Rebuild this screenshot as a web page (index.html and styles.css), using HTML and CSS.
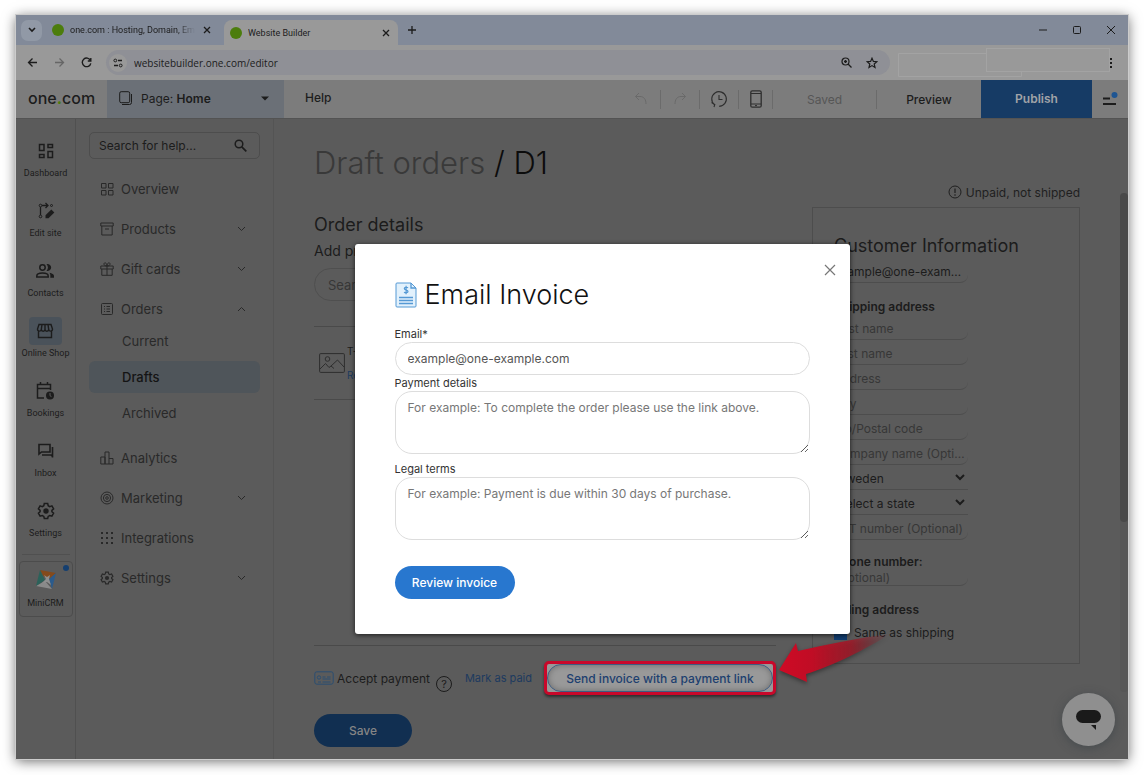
FILE: index.html
```html
<!DOCTYPE html>
<html lang="en">
  <head>
    <meta charset="UTF-8" />
    <meta name="viewport" content="width=device-width, initial-scale=1" />
    <title>Website Builder</title>
    <link rel="stylesheet" href="styles.css">
  </head>
  <body>
    <div class="window">
      <header class="tabs">
        <button class="tab-list" aria-label="Search tabs"><svg width="8" height="6" viewBox="0 0 8 6"><path d="M1 1l3 3 3-3" stroke-width="1.6" /></svg></button>
        <div class="tab">
          <span class="favicon"></span>
          <span class="tab-title fade">one.com : Hosting, Domain, Em</span>
          <button class="plain" aria-label="Close tab"><svg width="8" height="8" viewBox="0 0 8 8"><path d="M1 1l6 6M7 1L1 7" stroke-width="1.3" /></svg></button>
        </div>
        <div class="tab active">
          <span class="favicon"></span>
          <span class="tab-title">Website Builder</span>
          <button class="plain" aria-label="Close tab"><svg width="8" height="8" viewBox="0 0 8 8"><path d="M1 1l6 6M7 1L1 7" stroke-width="1.3" /></svg></button>
        </div>
        <button class="plain" aria-label="New tab"><svg width="10" height="10" viewBox="0 0 10 10"><path d="M5 1v8M1 5h8" stroke-width="1.3" /></svg></button>
        <div class="window-buttons">
          <button class="plain" aria-label="Minimize"><svg width="10" height="10" viewBox="0 0 10 10"><path d="M1 5h8" /></svg></button>
          <button class="plain" aria-label="Maximize"><svg width="10" height="10" viewBox="0 0 10 10"><rect x="1.5" y="1.5" width="7" height="7" rx="1" /></svg></button>
          <button class="plain" aria-label="Close"><svg width="10" height="10" viewBox="0 0 10 10"><path d="M1 1l8 8M9 1L1 9" /></svg></button>
        </div>
      </header>

      <div class="toolbar">
        <button class="plain" aria-label="Back"><svg width="11" height="11" viewBox="0 0 11 11"><path d="M10 5.500H1.500M5.500 1.500l-4 4 4 4" stroke-width="1.3" /></svg></button>
        <button class="plain muted" aria-label="Forward"><svg width="11" height="11" viewBox="0 0 11 11"><path d="M1 5.500h8.500M5.500 1.500l4 4-4 4" stroke-width="1.3" /></svg></button>
        <button class="plain" aria-label="Reload"><svg width="11" height="11" viewBox="0 0 11 11"><path d="M9.500 3.500A4.300 4.300 0 1 0 9.800 6.300M9.800 1v3H6.800" stroke-width="1.4" /></svg></button>
        <div class="address">
          <span class="site-info"><svg width="10" height="10" viewBox="0 0 10 10"><circle cx="2.300" cy="2.500" r="1.400" /><path d="M5 2.500h4M1 7.500h4" stroke-width="1.3" /><circle cx="7.700" cy="7.500" r="1.400" /></svg></span>
          <input class="url" type="text" value="websitebuilder.one.com/editor" aria-label="Address">
          <svg width="11" height="11" viewBox="0 0 11 11"><circle cx="4.500" cy="4.500" r="3.500" stroke-width="1.2" /><path d="M7 7l3.500 3.500M3 4.500h3M4.500 3v3" stroke-width="1.3" /></svg>
          <svg class="star" width="12" height="12" viewBox="0 0 12 12"><path d="M6 1.200l1.400 3.200 3.500.3-2.700 2.300.8 3.400L6 8.600l-3 1.800.8-3.400L1.100 4.700l3.500-.3z" stroke-width="1.2" /></svg>
        </div>
        <svg class="extensions" width="213" height="30" viewBox="0 0 213 30"><path d="M88.500 5.500H.5v23h123v-5" /><rect x="88.500" y=".5" width="123" height="23" /></svg>
        <button class="plain" aria-label="Menu"><svg width="4" height="12" viewBox="0 0 4 12"><path class="solid" d="M1 1h2v2H1zM1 5h2v2H1zM1 9h2v2H1z" /></svg></button>
      </div>

      <nav class="appbar">
        <a class="logo" href="#">one<span>.</span>com</a>
        <button class="page-select">
          <svg width="14" height="15" viewBox="0 0 14 15"><rect x=".7" y=".7" width="10" height="11" rx="1.500" /><path d="M3 13.500h7.500a2 2 0 0 0 2-2V3" /></svg>
          <span>Page: <b>Home</b></span>
          <svg width="8" height="5" viewBox="0 0 8 5"><path class="solid" d="M0 .5h8L4 4.500z" /></svg>
        </button>
        <a class="help" href="#">Help</a>
        <div class="actions">
          <button class="action ghost" aria-label="Undo"><svg width="14" height="14" viewBox="0 0 14 14"><path d="M5 1L1.500 4.500 5 8M1.500 4.500H6c4 0 6 3 6 7.500" /></svg></button>
          <button class="action ghost" aria-label="Redo"><svg width="14" height="14" viewBox="0 0 14 14"><path d="M9 1l3.500 3.500L9 8M12.500 4.500H8C4 4.500 2 7.500 2 12" /></svg></button>
          <button class="action" aria-label="History"><svg width="18" height="18" viewBox="0 0 18 18"><path d="M4.500 14.700A7.300 7.300 0 1 1 9 16.300M1.500 12.500l3.300 2-.8 2.500M9 5v4.500h3.500" stroke-width="1.1" /></svg></button>
          <button class="action phone" aria-label="Mobile view"><svg width="12" height="18" viewBox="0 0 12 18"><rect x=".8" y=".8" width="10.400" height="16.400" rx="1.500" stroke-width="1.3" /><path d="M1 3.500h10M1 14h10M5 15.600h2" /></svg></button>
          <span class="saved">Saved</span>
          <button class="preview">Preview</button>
        </div>
        <button class="publish">Publish</button>
        <button class="burger" aria-label="Main menu">
          <svg width="16" height="16" viewBox="0 0 16 16"><path d="M1 7.500h7M1 13h13" stroke-width="2" /><circle class="dot" cx="12.500" cy="4" r="3" /></svg>
        </button>
      </nav>

      <div class="app">
        <aside class="rail">
          <a class="rail-item" href="#"><span class="rail-icon"><svg width="18" height="18" viewBox="0 0 18 18"><path d="M2.500 2.500h4.500v6H2.500zM11 2.500h4.500v3H11zM2.500 12.500h4.500v3H2.500zM11 9.500h4.500v6H11z" stroke-width="1.500" /></svg></span>Dashboard</a>
          <a class="rail-item" href="#"><span class="rail-icon"><svg width="18" height="18" viewBox="0 0 18 18"><circle cx="3.500" cy="3.500" r="1.300" /><circle cx="3.500" cy="14.500" r="1.300" /><circle cx="14.500" cy="3.500" r="1" /><path d="M3.500 5v8M5 3.500h6M8.500 1l2.500 2.500L8.500 6" stroke-width="1.300" /><path class="solid" d="M8.500 16.300v-3l5.800-5.800 3 3-5.800 5.800z" /></svg></span>Edit site</a>
          <a class="rail-item" href="#"><span class="rail-icon"><svg width="20" height="18" viewBox="0 0 20 18"><circle cx="7.500" cy="5.500" r="2.700" stroke-width="1.500" /><path d="M1.800 15v-1c0-1.800 2.700-3 5.700-3s5.700 1.200 5.700 3v1z" stroke-width="1.500" /><path class="solid" d="M11.500 2.200a3.500 3.500 0 1 1 0 6.600 4.500 4.500 0 0 0 0-6.600zM14.500 10.800c2.500.6 4.500 1.500 4.500 3.200v1.700h-3.700c.2-2 .2-3.300-.8-4.900z" /></svg></span>Contacts</a>
          <a class="rail-item current" href="#"><span class="rail-icon"><svg width="18" height="18" viewBox="0 0 18 18"><path d="M2.500 9v6.500h13V9M3 2.500h12L16.500 7c0 2.800-3.500 2.800-3.800.3-.2 2.500-3.500 2.500-3.700 0-.2 2.500-3.500 2.500-3.700 0C5 9.800 1.500 9.800 1.500 7zM5.300 7.300l.7-4.800M9 7.300V2.500M12.700 7.300L12 2.500" stroke-width="1.400" /></svg></span>Online Shop</a>
          <a class="rail-item" href="#"><span class="rail-icon"><svg width="20" height="20" viewBox="0 0 20 20"><path d="M9 17H2.500V3.500h13V9M2.500 7.500h13M5.500 1v2.500M12.500 1v2.500" stroke-width="1.500" /><circle class="solid" cx="15" cy="14.500" r="4" /><path class="hand" d="M15 12v2.700l1.500 1" /></svg></span>Bookings</a>
          <a class="rail-item" href="#"><span class="rail-icon"><svg width="18" height="18" viewBox="0 0 18 18"><path d="M2 12V2.500h11V10H4.500zM15.500 5v10.500M5 13h9l2 2" stroke-width="1.600" /></svg></span>Inbox</a>
          <a class="rail-item" href="#"><span class="rail-icon"><svg width="18" height="18" viewBox="0 0 18 18"><path d="M7.300 1.500h3.400l.5 2.200 1.500.9 2.200-.7 1.700 3-1.700 1.500v1.300l1.700 1.500-1.700 3-2.200-.7-1.500.9-.5 2.100H7.300l-.5-2.100-1.500-.9-2.200.7-1.700-3 1.700-1.500V8.400L1.400 6.900l1.700-3 2.200.7 1.500-.9z" stroke-width="1.500" /><circle class="solid" cx="9" cy="9" r="2.700" /></svg></span>Settings</a>
          <hr>
          <a class="crm" href="#">
            <svg width="22" height="22" viewBox="0 0 22 22"><path class="orange" d="M5 1l16 3-6 6-7-3z" /><path class="blue" d="M21 4l-4 16-3-10z" /><path class="grey" d="M1 17l9-5 7 8z" /><path class="green" d="M5 1L1 17l9-6z" /><path class="white" d="M9 6l3 2 3-2-1 4 2 6-4-3-5 1 4-4z" /></svg>
            MiniCRM
            <span class="badge"></span>
          </a>
        </aside>

        <div class="workspace">
          <nav class="menu">
            <div class="help-search">
              <input type="search" placeholder="Search for help..." aria-label="Search for help">
              <svg width="13" height="13" viewBox="0 0 13 13"><circle cx="5" cy="5" r="3.800" stroke-width="1.500" /><path d="M7.800 7.800l4.500 4.500" stroke-width="1.700" /></svg>
            </div>
            <a class="menu-item" href="#"><svg width="14" height="14" viewBox="0 0 14 14"><path d="M1.500 1.500H6V6H1.500zM8.500 1.500H13V6H8.500zM1.500 8.500H6V13H1.500zM8.500 8.500H13V13H8.500z" /></svg><span>Overview</span></a>
            <a class="menu-item" href="#"><svg width="14" height="14" viewBox="0 0 14 14"><path d="M.8 1h12.400v3H.8zM1.800 4v9h10.400V4M5 7h4" /></svg><span>Products</span><svg width="9" height="6" viewBox="0 0 9 6"><path d="M1 1l3.500 3.500L8 1" /></svg></a>
            <a class="menu-item" href="#"><svg width="14" height="14" viewBox="0 0 14 14"><path d="M.8 4h12.400v3H.8zM1.800 7v6.300h10.400V7M7 4v9.300M7 4C3 4 3.500.5 5.300.8 6.700 1 7 4 7 4s.3-3 1.700-3.200C10.500.5 11 4 7 4z" /></svg><span>Gift cards</span><svg width="9" height="6" viewBox="0 0 9 6"><path d="M1 1l3.500 3.500L8 1" /></svg></a>
            <a class="menu-item" href="#"><svg width="14" height="14" viewBox="0 0 14 14"><rect x="1.500" y="1.500" width="11" height="11" rx="1" /><path d="M4 4.500h1M4 7h1M4 9.500h1M6.500 4.500H10M6.500 7H10M6.500 9.500H10" /></svg><span>Orders</span><svg width="9" height="6" viewBox="0 0 9 6"><path d="M1 5l3.500-3.500L8 5" /></svg></a>
            <div class="submenu">
              <a href="#">Current</a>
              <a class="current" href="#">Drafts</a>
              <a href="#">Archived</a>
            </div>
            <a class="menu-item" href="#"><svg width="14" height="14" viewBox="0 0 14 14"><path d="M.8 6H5v7H.8zM5 13V1h4v12M9 7.500h4V13H5" /></svg><span>Analytics</span></a>
            <a class="menu-item" href="#"><svg width="14" height="14" viewBox="0 0 14 14"><circle cx="7" cy="7" r="6" /><circle cx="7" cy="7" r="3.600" /><circle cx="7" cy="7" r="1.300" /></svg><span>Marketing</span><svg width="9" height="6" viewBox="0 0 9 6"><path d="M1 1l3.500 3.500L8 1" /></svg></a>
            <a class="menu-item" href="#"><svg width="14" height="14" viewBox="0 0 14 14"><path d="M2 1v12M7 1v12M12 1v12" stroke-width="2" stroke-dasharray="2 3" /></svg><span>Integrations</span></a>
            <a class="menu-item" href="#"><svg width="14" height="14" viewBox="0 0 18 18"><path d="M7.300 1.500h3.400l.5 2.200 1.500.9 2.200-.7 1.700 3-1.700 1.500v1.300l1.700 1.500-1.700 3-2.200-.7-1.500.9-.5 2.100H7.300l-.5-2.100-1.500-.9-2.200.7-1.700-3 1.700-1.500V8.400L1.400 6.900l1.700-3 2.200.7 1.500-.9z" stroke-width="1.500" /><circle class="solid" cx="9" cy="9" r="2.700" /></svg><span>Settings</span><svg width="9" height="6" viewBox="0 0 9 6"><path d="M1 1l3.500 3.500L8 1" /></svg></a>
          </nav>

          <main class="content">
            <section class="order">
              <h1><a href="#">Draft orders</a> / D1</h1>
              <h2>Order details</h2>
              <label class="add-label" for="product">Add products</label>
              <input class="product-search" type="text" id="product" placeholder="Search products">
              <div class="product">
                <svg width="26" height="20" viewBox="0 0 26 20"><rect x=".6" y=".6" width="24.800" height="18.800" rx="1" /><circle cx="8.500" cy="6" r="2.300" /><path d="M1 16l5.500-5.500 3.500 4 2-1.500 3 2.500M12 13l6.500-6L25 14" /></svg>
                <div class="product-info">
                  <span>T-shirt</span>
                  <a href="#">Remove</a>
                </div>
              </div>
              <div class="order-actions">
                <svg class="card-icon" width="20" height="14" viewBox="0 0 20 14"><rect x=".8" y=".8" width="18.400" height="12.400" rx="2" /><circle cx="5" cy="6.500" r="1.700" /><path d="M8.500 6h3M13 6h3.500M8.500 8h8M4 11h3M8.500 11h8" /></svg>
                <span class="accept">Accept payment</span>
                <button class="question" aria-label="About payments">?</button>
                <a class="paid" href="#">Mark as paid</a>
                <div class="send-wrap">
                  <button class="send">Send invoice with a payment link</button>
                  <svg class="arrow" width="114" height="52" viewBox="0 0 114 52">
                    <defs>
                      <linearGradient id="fade">
                        <stop offset="0" stop-color="#cf0a25" />
                        <stop offset=".3" stop-color="#c00d25" />
                        <stop offset=".65" stop-color="#a01827" stop-opacity=".85" />
                        <stop offset="1" stop-color="#8a2630" stop-opacity="0" />
                      </linearGradient>
                    </defs>
                    <path fill="url(#fade)" d="M1 37L18 10l2 8c30-7 60-13 92-17C90 15 55 33 28 41l1 8z" />
                  </svg>
                </div>
              </div>
              <button class="save">Save</button>
            </section>

            <section class="side">
              <p class="status"><svg width="14" height="14" viewBox="0 0 14 14"><circle cx="7" cy="7" r="6" /><path d="M7 3.500v4.500M7 9.300v1.400" stroke-width="1.200" /></svg>Unpaid, not shipped</p>
              <form class="customer">
                <h2>Customer Information</h2>
                <input type="text" value="example@one-example.com" aria-label="Customer email">
                <h3>Shipping address</h3>
                <input type="text" placeholder="First name" aria-label="First name">
                <input type="text" placeholder="Last name" aria-label="Last name">
                <input type="text" placeholder="Address" aria-label="Address">
                <input type="text" placeholder="City" aria-label="City">
                <input type="text" placeholder="Zip/Postal code" aria-label="Zip/Postal code">
                <input type="text" placeholder="Company name (Optional)" aria-label="Company name">
                <select aria-label="Country"><option>Sweden</option></select>
                <select aria-label="State"><option>Select a state</option></select>
                <input type="text" placeholder="VAT number (Optional)" aria-label="VAT number">
                <label class="field-title" for="phone">Phone number:</label>
                <input class="short" type="tel" id="phone" placeholder="(Optional)">
                <h3>Billing address</h3>
                <label class="same"><input type="checkbox" checked>Same as shipping</label>
              </form>
            </section>
          </main>

          <div class="scrollbar"><div class="thumb"></div></div>

          <div class="overlay">
            <form class="modal" role="dialog" aria-labelledby="modalTitle">
              <button class="close" type="button" aria-label="Close"><svg width="12" height="12" viewBox="0 0 12 12"><path d="M1 1l10 10M11 1L1 11" stroke-width="1.200" /></svg></button>
              <h2 id="modalTitle">
                <svg width="22" height="26" viewBox="0 0 22 26"><path class="sheet" d="M2 1h14l5 5v18a1 1 0 0 1-1 1H2a1 1 0 0 1-1-1V2a1 1 0 0 1 1-1z" /><path d="M16 1v5h5M4 15.500h14M4 18.500h14M4 21.500h14" stroke-width="1.300" /><path d="M13 5.800c-.7-.8-3.700-.8-3.700.8 0 2 3.700 1 3.700 2.900 0 1.600-3 1.600-3.900.6M11.100 3.700v8.500" stroke-width="1.200" /></svg>
                Email Invoice
              </h2>
              <label for="email">Email*</label>
              <input type="text" id="email" value="example@one-example.com">
              <label for="details">Payment details</label>
              <textarea id="details" placeholder="For example: To complete the order please use the link above."></textarea>
              <label class="legal" for="terms">Legal terms</label>
              <textarea id="terms" placeholder="For example: Payment is due within 30 days of purchase."></textarea>
              <button class="review" type="button">Review invoice</button>
            </form>
          </div>

          <button class="chat" aria-label="Chat"><svg width="26" height="22" viewBox="0 0 26 22"><rect x="0" y="1" width="25" height="13" rx="6.500" /><path d="M15 16h5v5z" /></svg></button>
        </div>
      </div>
    </div>
  </body>
</html>
```
FILE: styles.css
```css
* {
  box-sizing: border-box;
  margin: 0;
  padding: 0;
}

body {
  font-family: 'Inter', sans-serif;
  font-size: 13px;
  background-color: #fff;
  color: #1c1c1c;
  display: flex;
  min-height: 100vh;
  padding: 15px 16px 16px;
}

a {
  color: inherit;
  text-decoration: none;
}

button,
input,
select,
textarea {
  font: inherit;
  color: inherit;
  background: none;
  border: none;
  outline: none;
}

button {
  cursor: pointer;
}

svg {
  display: block;
  flex: none;
  fill: none;
  stroke: currentColor;
}

.solid {
  fill: currentColor;
  stroke: none;
}

.window {
  flex: 1;
  display: flex;
  flex-direction: column;
  min-width: 0;
  background-color: #5b5b5b;
  box-shadow: 0 0 0 1px #ccc, 0 2px 12px rgba(0, 0, 0, 0.6);
}

/* browser chrome */
.tabs {
  display: flex;
  align-items: center;
  height: 30px;
  padding-left: 5px;
  background-color: #828a99;
  font-family: 'Roboto', sans-serif;
  font-size: 9px;
}

.plain {
  display: flex;
  padding: 2px;
}

.tab-list {
  display: flex;
  align-items: center;
  justify-content: center;
  width: 21px;
  height: 21px;
  border-radius: 7px;
  background-color: #9199a6;
}

.tab {
  display: flex;
  align-items: center;
  gap: 6px;
  width: 174px;
  height: 25px;
  padding: 0 3px 0 10px;
}

.tab.active {
  align-self: flex-end;
  margin: 0 7px 0 8px;
  padding: 0 6px;
  background-color: #999;
  border-radius: 8px 8px 0 0;
}

.favicon {
  flex: none;
  width: 12px;
  height: 12px;
  border-radius: 50%;
  background-color: #4c7d0c;
}

.tab-title {
  flex: 1;
  overflow: hidden;
  white-space: nowrap;
}

.tab-title.fade {
  mask-image: linear-gradient(to right, #000 85%, transparent);
}

.window-buttons {
  display: flex;
  gap: 20px;
  margin-left: auto;
  padding-right: 10px;
}

.toolbar {
  display: flex;
  align-items: center;
  gap: 12px;
  height: 35px;
  padding: 0 13px 0 9px;
  background-color: #999;
}

.toolbar .muted {
  color: #666;
}

.address {
  flex: 1;
  display: flex;
  align-items: center;
  gap: 14px;
  height: 25px;
  padding: 0 12px 0 3px;
  border-radius: 13px;
  background-color: #8f9096;
}

.site-info {
  display: flex;
  align-items: center;
  justify-content: center;
  width: 18px;
  height: 18px;
  border-radius: 50%;
  background-color: #999;
}

.url {
  flex: 1;
  min-width: 0;
  margin-left: -7px;
  font-family: 'Open Sans', sans-serif;
  font-size: 10px;
}

.extensions {
  margin: 0 -12px 0 -4px;
  margin-right: -16px;
  stroke: #a3a3a3;
}

/* editor bar */
.appbar {
  display: flex;
  align-items: stretch;
  height: 38px;
  background-color: #7c7c7c;
  font-size: 12px;
}

.logo {
  width: 91px;
  padding: 8px 0 0 12px;
  font-size: 16px;
  font-weight: 500;
}

.logo span {
  color: #4c7d0c;
  font-weight: 700;
}

.page-select {
  display: flex;
  align-items: center;
  gap: 8px;
  width: 177px;
  padding: 0 15px 2px 12px;
  background-color: #6b7077;
  text-align: left;
}

.page-select span {
  flex: 1;
}

.page-select b {
  font-weight: 600;
}

.help {
  padding: 10px 0 0 21px;
  font-weight: 500;
}

.actions {
  display: flex;
  align-items: center;
  margin-left: auto;
}

.action {
  display: flex;
  align-items: center;
  justify-content: center;
  width: 39px;
  height: 19px;
  border-right: 1px solid #6b6b6b;
}

.action.phone {
  width: 34px;
}

.action svg {
  color: #2e2e2e;
}

.action.ghost svg {
  color: #6a6a6a;
}

.saved {
  width: 104px;
  border-right: 1px solid #6b6b6b;
  color: #565656;
  line-height: 19px;
  text-align: center;
}

.preview {
  width: 104px;
  font-weight: 500;
}

.publish {
  width: 111px;
  padding-bottom: 2px;
  background-color: #163b65;
  color: #a0a3a8;
  font-weight: 600;
}

.burger {
  display: flex;
  align-items: center;
  justify-content: center;
  width: 36px;
}

.burger .dot {
  fill: #1f5592;
  stroke: none;
}

/* left rail */
.app {
  flex: 1;
  display: flex;
  border-top: 1px solid #535353;
}

.rail {
  flex: none;
  display: flex;
  flex-direction: column;
  align-items: center;
  gap: 18px;
  width: 60px;
  padding-top: 18px;
  border-right: 1px solid #505050;
  font-family: 'Roboto', sans-serif;
  font-size: 9px;
  line-height: 12px;
  white-space: nowrap;
}

.rail-item {
  display: flex;
  flex-direction: column;
  align-items: center;
  gap: 2px;
}

.rail-icon {
  display: flex;
  align-items: center;
  justify-content: center;
  width: 33px;
  height: 28px;
  border-radius: 4px;
}

.rail-item.current .rail-icon {
  background-color: #4a525a;
}

.hand {
  stroke: #5b5b5b;
}

.rail hr {
  width: 48px;
  border: none;
  border-top: 1px solid #505050;
  margin: -3px 0 -12px;
}

.crm {
  position: relative;
  display: flex;
  flex-direction: column;
  align-items: center;
  gap: 6px;
  width: 54px;
  padding: 7px 0;
  border: 1px solid #4c4c4c;
  border-radius: 4px;
}

.crm svg {
  stroke: none;
}

.orange { fill: #844a1c; }
.blue { fill: #2b5b8c; }
.grey { fill: #8a8a8a; }
.green { fill: #2b625a; }
.white { fill: #8f8f8f; }

.badge {
  position: absolute;
  top: 3px;
  right: 3px;
  width: 6px;
  height: 6px;
  border-radius: 50%;
  background-color: #153f70;
}

/* shop menu */
.workspace {
  position: relative;
  flex: 1;
  display: flex;
  min-width: 0;
}

.menu {
  flex: none;
  width: 198px;
  padding: 13px 13px 0;
  border-right: 1px solid #545454;
  color: #292929;
}

.help-search {
  display: flex;
  align-items: center;
  height: 27px;
  padding: 0 12px 0 9px;
  border: 1px solid #4d4d4d;
  border-radius: 5px;
  margin-bottom: 14px;
  color: #1c1c1c;
  font-size: 12px;
}

.help-search input {
  flex: 1;
  min-width: 0;
}

.help-search input::placeholder {
  color: #1c1c1c;
}

.menu-item {
  display: flex;
  align-items: center;
  gap: 7px;
  height: 32px;
  padding: 0 14px 0 11px;
  margin-bottom: 8px;
}

.menu-item span {
  flex: 1;
}

.submenu {
  display: flex;
  flex-direction: column;
  gap: 4px;
  margin: -8px 0 13px;
}

.submenu a {
  height: 32px;
  padding-left: 33px;
  border-radius: 6px;
  line-height: 32px;
}

.submenu .current {
  background-color: #4f555a;
  color: #141414;
  font-weight: 500;
}

/* order page */
.content {
  flex: 1;
  display: grid;
  grid-template-columns: 1fr 268px;
  gap: 36px;
  min-width: 0;
  padding: 24px 48px 12px 40px;
}

.order {
  display: flex;
  flex-direction: column;
  align-items: flex-start;
}

h1 {
  font-size: 31px;
  font-weight: 300;
  line-height: 40px;
  color: #0c0c0c;
}

h1 a {
  color: #393939;
}

.content h2 {
  font-size: 18px;
  font-weight: 400;
  line-height: 24px;
}

.order h2 {
  margin-top: 30px;
}

.add-label {
  margin: 4px 0 7px;
  font-size: 14px;
  line-height: 20px;
}

.product-search {
  width: 100%;
  height: 33px;
  padding: 0 13px;
  border: 1px solid #4f4f4f;
  border-radius: 17px;
}

.content input::placeholder {
  color: #373737;
}

.product {
  display: flex;
  align-items: center;
  gap: 2px;
  width: 100%;
  height: 74px;
  margin-top: 25px;
  padding-left: 5px;
  border-top: 1px solid #4a4a4a;
  border-bottom: 1px solid #4a4a4a;
}

.product svg {
  color: #2e2e2e;
}

.product-info {
  display: flex;
  flex-direction: column;
  gap: 10px;
  font-size: 10px;
  line-height: 14px;
}

.product-info a {
  color: #1d3a5f;
}

.order-actions {
  display: flex;
  align-items: center;
  width: 100%;
  margin-top: auto;
  padding-top: 15px;
  border-top: 1px solid #4a4a4a;
  white-space: nowrap;
}

.card-icon {
  color: #2a4e72;
}

.accept {
  margin: 0 6px 0 3px;
  font-size: 12px;
}

.question {
  width: 16px;
  height: 16px;
  margin-top: 12px;
  border: 1px solid #1c1c1c;
  border-radius: 50%;
  font-size: 11px;
  line-height: 14px;
}

.paid {
  margin-left: 13px;
  color: #1d3a5f;
  font-size: 11px;
}

/* marked button */
.send-wrap {
  position: relative;
  height: 34px;
  margin-left: auto;
  border: 3px solid #c9082a;
  border-radius: 5px;
  background-color: #999;
  box-shadow: 0 2px 3px rgba(0, 0, 0, 0.5);
}

.send {
  width: 226px;
  height: 28px;
  border: 1px solid #3e5c82;
  border-radius: 14px;
  box-shadow: inset 0 0 6px rgba(0, 0, 0, 0.3);
  color: #1d406f;
  font-size: 12px;
  font-weight: 500;
}

.arrow {
  position: absolute;
  left: 231px;
  top: -31px;
  z-index: 3;
  stroke: none;
  filter: drop-shadow(0 2px 2px rgba(0, 0, 0, 0.4));
}

.save {
  width: 98px;
  height: 33px;
  margin-top: 19px;
  border-radius: 17px;
  background-color: #112f51;
  color: #858585;
  font-size: 12px;
  font-weight: 500;
}

/* customer column */
.side {
  padding-top: 40px;
}

.status {
  display: flex;
  align-items: center;
  justify-content: flex-end;
  gap: 4px;
  height: 18px;
  margin-bottom: 6px;
  color: #1f1f1f;
  font-size: 12px;
}

.customer {
  display: flex;
  flex-direction: column;
  align-items: flex-start;
  padding: 26px 21px 22px;
  border: 1px solid #4d4d4d;
  font-size: 12px;
}

.customer > input,
.customer > select {
  width: 134px;
  height: 25px;
  padding-top: 2px;
  border-bottom: 1px solid #4d4d4d;
  border-radius: 0 0 8px 0;
  text-overflow: ellipsis;
}

.customer > select {
  border-radius: 0;
}

.customer h3,
.field-title {
  margin-top: 16px;
  font-size: 12px;
  font-weight: 600;
  line-height: 16px;
}

.customer .field-title {
  margin-top: 14px;
}

.customer > .short {
  height: 16px;
  padding: 0;
}

.same {
  display: flex;
  align-items: center;
  gap: 7px;
  margin-top: 7px;
  line-height: 16px;
}

.same input {
  width: 13px;
  height: 13px;
  appearance: none;
  background-color: #123e70;
}

.scrollbar {
  position: absolute;
  top: 74px;
  right: 0;
  bottom: 67px;
  width: 8px;
  border-radius: 4px;
  background-color: #575757;
}

.thumb {
  height: 66%;
  border-radius: 4px;
  background-color: #494949;
}

/* email dialog */
.overlay {
  position: absolute;
  inset: 0;
  display: flex;
  align-items: center;
  justify-content: center;
}

.modal {
  position: relative;
  display: flex;
  flex-direction: column;
  align-items: flex-start;
  width: 495px;
  padding: 36px 40px 35px;
  border-radius: 3px;
  background-color: #fff;
  box-shadow: 0 1px 5px rgba(0, 0, 0, 0.7);
  font-size: 12px;
}

.close {
  position: absolute;
  top: 20px;
  right: 14px;
  color: #777;
}

.modal h2 {
  display: flex;
  align-items: center;
  gap: 8px;
  margin-bottom: 16px;
  font-size: 27px;
  font-weight: 300;
  line-height: 30px;
  color: #111;
}

.modal h2 svg {
  color: #5599d4;
}

.sheet {
  fill: #e2f1fc;
}

.modal label {
  font-size: 11px;
  line-height: 16px;
  color: #333;
}

.modal input,
.modal textarea {
  width: 100%;
  border: 1px solid #ddd;
  border-radius: 17px;
  color: #555;
}

.modal input {
  height: 33px;
  padding: 0 12px;
}

.modal textarea {
  height: 63px;
  padding: 8px 12px;
  line-height: 16px;
}

.modal textarea::placeholder {
  color: #777;
}

.modal .legal {
  margin-top: 7px;
}

.review {
  width: 120px;
  height: 33px;
  margin-top: 26px;
  border-radius: 17px;
  background-color: #2877cf;
  color: #fff;
  font-weight: 500;
}

.chat {
  position: absolute;
  right: 13px;
  bottom: 13px;
  display: flex;
  align-items: center;
  justify-content: center;
  width: 53px;
  height: 53px;
  border-radius: 50%;
  background-color: #8f8f8f;
  box-shadow: 0 2px 10px rgba(50, 60, 65, 0.5);
}

.chat svg {
  fill: #1a1a1a;
  stroke: none;
}
```
